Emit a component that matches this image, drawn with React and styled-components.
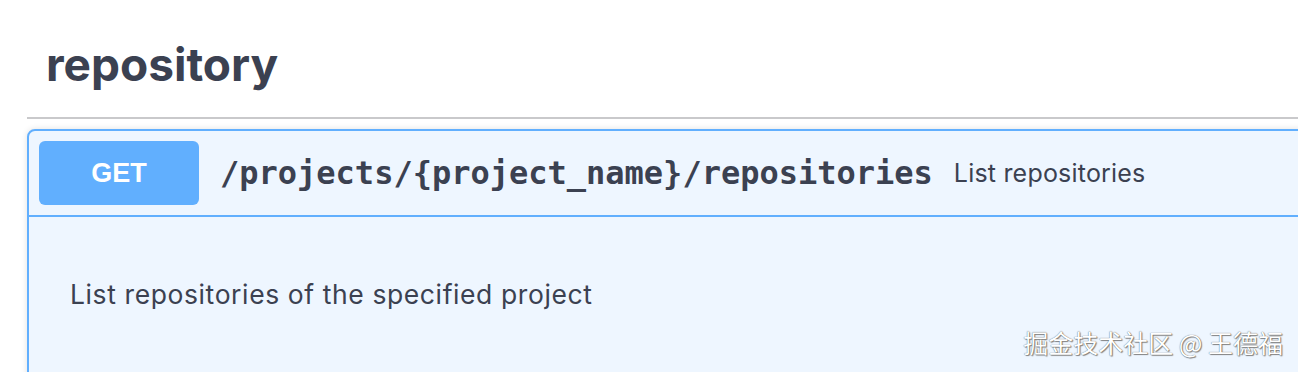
import React from 'react'
import styled, { createGlobalStyle } from 'styled-components'

const GlobalStyle = createGlobalStyle`
  html, body {
    margin: 0;
    padding: 0;
    background: #fff;
    overflow: hidden;
  }
  body {
    font-family: Inter, "Liberation Sans", sans-serif;
    color: #3b4151;
  }
`;

const Page = styled.div`
  position: relative;
  height: 372px;
  overflow: hidden;
`;

const TagSection = styled.section`
  padding-left: 27px;
  width: calc(100% + 40px);
  box-sizing: border-box;
`;

const TagHeader = styled.h3`
  display: flex;
  align-items: center;
  height: 107px;
  margin: 0 0 10px;
  padding: 10px 0 0 19px;
  border-bottom: 2px solid #c9c9cb;
  font-family: Inter, "Liberation Sans", sans-serif;
  font-size: 46px;
  font-weight: 700;
  color: #3b4151;
`;

const Opblock = styled.div`
  border: 2px solid #61affe;
  border-radius: 8px;
  background: #eef6ff;
  box-shadow: 0 0 6px rgba(0, 0, 0, 0.12);
`;

const Summary = styled.div`
  display: flex;
  align-items: center;
  padding: 10px;
  border-bottom: 2px solid #61affe;
`;

const Method = styled.span`
  display: flex;
  align-items: center;
  justify-content: center;
  width: 160px;
  height: 64px;
  border-radius: 6px;
  background: ${p => p.color};
  color: #fff;
  font-family: "Liberation Sans", Arial, sans-serif;
  font-size: 27px;
  font-weight: 700;
`;

const Path = styled.span`
  margin-left: 21px;
  font-family: "DejaVu Sans Mono", monospace;
  font-size: 32px;
  font-weight: 700;
  color: #3b4151;
`;

const SummaryDesc = styled.span`
  margin-left: 21px;
  font-size: 25px;
  letter-spacing: 0.2px;
  color: #3b4151;
`;

const Body = styled.div`
  padding: 30px 40px;
  min-height: 200px;
`;

const Description = styled.p`
  margin: 28px 0;
  padding-left: 1px;
  font-size: 26.5px;
  letter-spacing: 0.6px;
  line-height: 39px;
  color: #3b4151;
`;

const Watermark = styled.div`
  position: absolute;
  right: 15px;
  bottom: 12px;
  font-family: "Noto Sans CJK SC", sans-serif;
  font-size: 25px;
  color: #fff;
  text-shadow: 0 0 1px #444, 1px 1px 1px #888;
`;

export default function App() {
  return (
    <Page>
      <GlobalStyle />
      <TagSection>
        <TagHeader>repository</TagHeader>
        <Opblock>
          <Summary>
            <Method color="#61affe">GET</Method>
            <Path>/projects/{'{'}project_name{'}'}/repositories</Path>
            <SummaryDesc>List repositories</SummaryDesc>
          </Summary>
          <Body>
            <Description>List repositories of the specified project</Description>
          </Body>
        </Opblock>
      </TagSection>
      <Watermark>掘金技术社区 @ 王德福</Watermark>
    </Page>
  )
}
